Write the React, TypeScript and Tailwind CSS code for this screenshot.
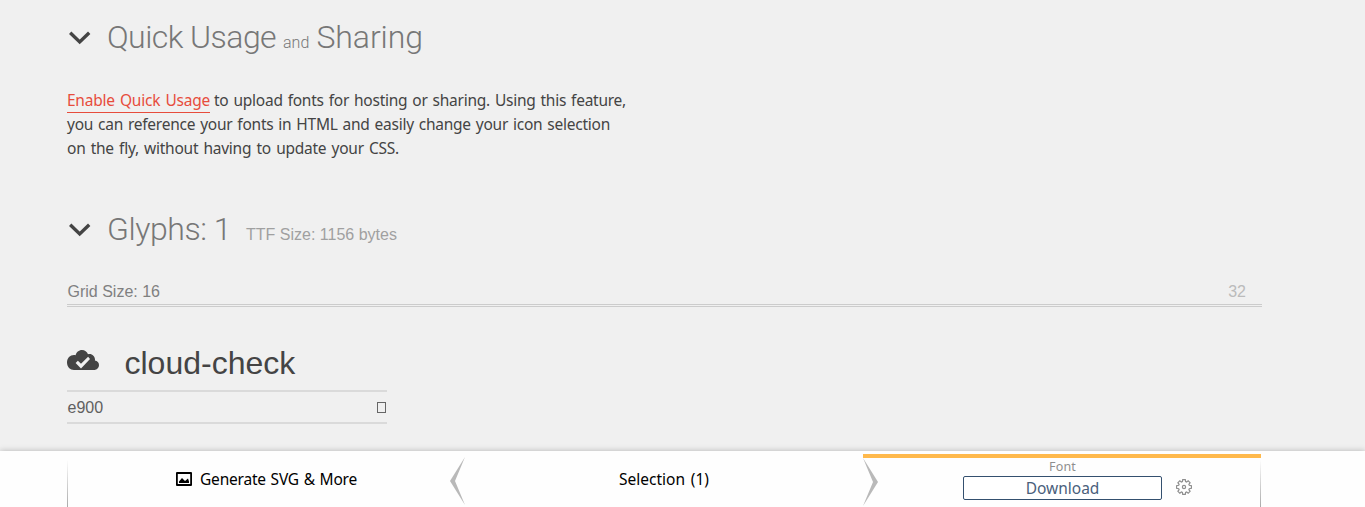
import React from "react";

const ubuntu = "font-['Noto_Sans','Open_Sans',sans-serif]";
const heading = "font-['Roboto','Open_Sans',sans-serif] font-light";

function Chevron() {
  return (
    <svg className="block h-[14px] w-[22px] shrink-0" viewBox="0 0 22 14" fill="none">
      <path d="M1.200 1.800 L10.700 11 L20.200 1.800" stroke="#444" strokeWidth="3.400" />
    </svg>
  );
}

function CloudCheck() {
  return (
    <svg className="block h-8 w-8 shrink-0" viewBox="0 0 32 32" fill="#444">
      <path
        fillRule="evenodd"
        d="M27.900 14.600c.1-.4.1-.8.1-1.100 0-3-2.500-5.500-5.500-5.500-.5 0-1 .1-1.500.2C20.100 5.700 17.700 4 15 4c-3.200 0-5.800 2.300-6.400 5.300C8.100 9.100 7.500 9 7 9c-3.900 0-7 3.100-7 7.500S3.100 24 7 24h20c2.800 0 5-2.200 5-5 0-2.200-1.700-4.100-4.100-4.400zM14 22.400l-5.400-5.400 2.300-2.300 3.100 3.100 7.100-7.100 1.900 2.300z"
      />
    </svg>
  );
}

function Picture() {
  return (
    <svg className="block h-4 w-4 shrink-0" viewBox="0 0 16 16">
      <path fillRule="evenodd" d="M1 1h14a1 1 0 0 1 1 1v12a1 1 0 0 1-1 1H1a1 1 0 0 1-1-1V2a1 1 0 0 1 1-1zm.8 2v10h12.400V3z" />
      <path d="M3 12V10.500L6 7l3 3 3-2.500 1 3V12z" />
    </svg>
  );
}

function Gear() {
  return (
    <svg className="block h-4 w-4 shrink-0" viewBox="0 0 16 16" fill="none" stroke="#8e8e8e" strokeWidth="1.200">
      <path d="M6.700 .6h2.600l.3 2 1 .4 1.600-1.200 1.900 1.900-1.200 1.600.4 1 2.100.4v2.600l-2.100.4-.4 1 1.200 1.600-1.900 1.900-1.600-1.200-1 .4-.3 2H6.700l-.3-2-1-.4-1.600 1.200-1.900-1.900 1.200-1.600-.4-1-2.100-.4V6.700l2.100-.4.4-1-1.200-1.600 1.900-1.900L5.400 3l1-.4z" />
      <circle cx="8" cy="8" r="1.600" />
    </svg>
  );
}

function Arrow({ flip = false }: { flip?: boolean }) {
  return (
    <svg className={flip ? "block h-12 w-[15px] -scale-x-100" : "block h-12 w-[15px]"} viewBox="0 0 15 48">
      <path d="M15 0 L0 24 L15 48 L5 24z" fill="#b9b9b9" />
    </svg>
  );
}

export default function App() {
  return (
    <div className="flex h-[507px] w-full flex-col overflow-hidden bg-[#f0f0f0] text-[#444]">
      <main className="flex h-[451px] w-[1262px] shrink-0 flex-col pl-[67px]">
        <header className="flex h-[74px] items-center">
          <div className="ml-[2px] pt-[2px]"><Chevron /></div>
          <h2 className={`${heading} ml-[16px] flex items-baseline whitespace-nowrap pt-[6px] text-[32px] leading-[48px] text-[#777]`}>
            <span className="w-[176px] tracking-[-0.550px]">Quick Usage</span>
            <span className="w-[33.500px] text-[16px]">and</span>
            <span className="tracking-[-0.100px]">Sharing</span>
          </h2>
        </header>

        <div className={`${ubuntu} mt-[14px] flex flex-col whitespace-nowrap text-[15.500px] leading-6 tracking-[-0.250px]`}>
          <div className="flex w-[559px]">
            <a className="h-[25px] w-[143px] border-b border-[#e74c3c] text-[#e74c3c] [text-align-last:justify]">Enable Quick Usage</a>
            <span className="ml-[4px] h-6 w-[412px] [text-align-last:justify]">to upload fonts for hosting or sharing. Using this feature,</span>
          </div>
          <span className="-mt-px w-[543px] [text-align-last:justify]">you can reference your fonts in HTML and easily change your icon selection</span>
          <span className="w-[332px] [text-align-last:justify]">on the fly, without having to update your CSS.</span>
        </div>

        <header className="mt-[45px] flex h-[50px] items-center">
          <div className="ml-[2px]"><Chevron /></div>
          <h2 className={`${heading} ml-[16px] w-[139px] whitespace-nowrap pb-[2px] text-[32px] leading-[48px] tracking-[-0.450px] text-[#777]`}>Glyphs: 1</h2>
          <span className="pt-[9px] font-['Liberation_Sans',sans-serif] text-[16px] leading-6 text-[#a0a0a0]">TTF Size: 1156 bytes</span>
        </header>

        <div className="mt-[24px] flex h-[28px] justify-between border-b-[3px] border-double border-[#ccc] pl-[0.500px] pr-4 font-['Liberation_Sans',sans-serif] text-[16px] leading-[26px] text-[#808080]">
          <span>Grid Size: 16</span>
          <span className="text-[#bbb]">32</span>
        </div>

        <section className="mt-[37px] w-[320px] font-['Liberation_Sans',sans-serif]">
          <div className="flex h-[48px] border-b-2 border-[#dadada]">
            <div className="mt-[2px]"><CloudCheck /></div>
            <span className="ml-[25.500px] text-[32px] leading-[38px]">cloud-check</span>
          </div>
          <div className="flex h-[32px] items-center justify-between border-b-2 border-[#dadada] pl-[0.500px] text-[16px] text-[#606060]">
            <span className="pt-[2px]">e900</span>
            <span className="mr-px h-[11px] w-[9px] border border-[#666]" />
          </div>
        </section>
      </main>

      <footer className={`${ubuntu} flex h-14 shrink-0 bg-[#fefefe] pl-[67px] text-[15.500px] text-black shadow-[0_0_6px_rgba(0,0,0,0.25)]`}>
        <div className="mt-2 w-px bg-gradient-to-b from-white to-[#aaa]" />
        <div className="flex w-[382px] pl-[108px] pt-[16px]">
          <div className="mt-[4px]"><Picture /></div>
          <span className="ml-[8px] w-[157px] whitespace-nowrap leading-6 tracking-[-0.200px] [text-align-last:justify]">Generate SVG &amp; More</span>
        </div>
        <div className="mt-[6px] w-[15px]"><Arrow /></div>
        <div className="w-[398px] pl-[154px] pt-[16px]">
          <span className="block w-[90px] whitespace-nowrap leading-6 [text-align-last:justify]">Selection (1)</span>
        </div>
        <div className="mt-[3px] flex w-[398px] border-t-4 border-[#ffb94c]">
          <Arrow flip />
          <div className="ml-[85px] flex w-[199px] flex-col">
            <span className="h-[18px] text-center text-[12.500px] leading-[17px] tracking-[0.200px] text-[#8e8e8e]">Font</span>
            <button className="h-[24px] rounded-[2px] border border-[#34506f] bg-white leading-[22px] text-[#4a607b]">Download</button>
          </div>
          <div className="ml-[14px] mt-[21px]"><Gear /></div>
        </div>
        <div className="-ml-px mt-2 w-px bg-gradient-to-b from-white to-[#aaa]" />
      </footer>
    </div>
  );
}
